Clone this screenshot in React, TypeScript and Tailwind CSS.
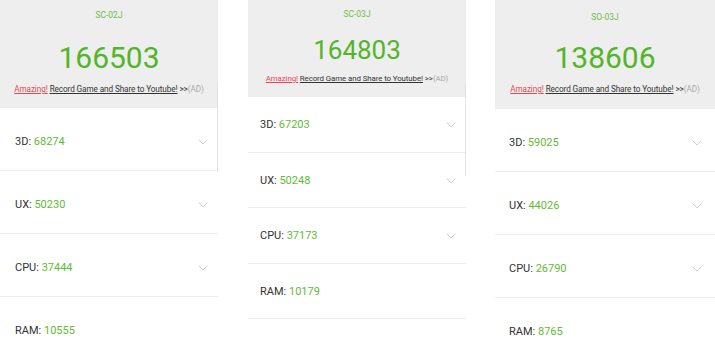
const panels = [
  {
    title: 'SC-02J',
    score: '166503',
    rows: [
      { label: '3D', value: '68274' },
      { label: 'UX', value: '50230' },
      { label: 'CPU', value: '37444' },
      { label: 'RAM', value: '10555' },
    ],
  },
  {
    title: 'SC-03J',
    score: '164803',
    rows: [
      { label: '3D', value: '67203' },
      { label: 'UX', value: '50248' },
      { label: 'CPU', value: '37173' },
      { label: 'RAM', value: '10179' },
    ],
  },
  {
    title: 'SO-03J',
    score: '138606',
    rows: [
      { label: '3D', value: '59025' },
      { label: 'UX', value: '44026' },
      { label: 'CPU', value: '26790' },
      { label: 'RAM', value: '8765' },
    ],
  },
];

function Chevron() {
  return (
    <svg width="10" height="6" viewBox="0 0 10 6" fill="none" className="shrink-0">
      <path d="M1 1l4 4 4-4" stroke="#cfcfcf" strokeWidth="1" strokeLinecap="round" strokeLinejoin="round" />
    </svg>
  );
}

function AdLine({ size }: { size: string }) {
  return (
    <div className={`whitespace-nowrap text-center leading-[12px] tracking-[-0.1px] ${size}`}>
      <span className="text-[#e8474f] underline">Amazing!</span>{' '}
      <span className="text-[#333] underline">Record Game and Share to Youtube!</span>{' '}
      <span className="text-[#333]">&gt;&gt;</span>
      <span className="text-[#aaa]">(AD)</span>
    </div>
  );
}

type Panel = (typeof panels)[number];

function Rows({ panel, rowClass, padClass, lastBorder }: {
  panel: Panel;
  rowClass: string;
  padClass: string;
  lastBorder?: boolean;
}) {
  return (
    <div className="flex flex-col">
      {panel.rows.map((r, i) => (
        <div
          key={r.label}
          className={`flex items-center justify-between border-[#ececec] ${rowClass} ${padClass} ${
            i < panel.rows.length - 1 || lastBorder ? 'border-b' : ''
          }`}
        >
          <span className="text-[11px] text-[#333]">
            {r.label}: <span className="text-[#62bb36]">{r.value}</span>
          </span>
          {r.label !== 'RAM' && <Chevron />}
        </div>
      ))}
    </div>
  );
}

export default function App() {
  const [p1, p2, p3] = panels;
  return (
    <div className="flex h-[360px] w-[715px] overflow-hidden bg-white font-['Roboto',sans-serif]">
      {/* SC-02J */}
      <div className="relative w-[218px] shrink-0">
        <div className="flex h-[108px] flex-col items-center bg-[#efeeef] pt-[9px]">
          <div className="text-[8.5px] leading-[12px] text-[#6cbf45]">{p1.title}</div>
          <div className="mt-[22px] text-[30px] leading-[30px] text-[#52b52a]">{p1.score}</div>
          <div className="mt-[10px]">
            <AdLine size="text-[8.2px]" />
          </div>
        </div>
        <Rows panel={p1} rowClass="h-[63px]" padClass="pl-[15px] pr-[10px] pt-[6px]" />
        <div className="absolute right-0 top-[82px] h-[90px] w-px bg-[#e2e2e2]" />
      </div>

      <div className="w-[30px] shrink-0" />

      {/* SC-03J */}
      <div className="relative w-[218px] shrink-0">
        <div className="flex h-[97px] flex-col items-center bg-[#efeeef] pt-[8px]">
          <div className="text-[8.5px] leading-[12px] text-[#6cbf45]">{p2.title}</div>
          <div className="mt-[17px] text-[26px] leading-[26px] text-[#52b52a]">{p2.score}</div>
          <div className="mt-[10px]">
            <AdLine size="text-[7.9px]" />
          </div>
        </div>
        <Rows panel={p2} rowClass="h-[55.5px]" padClass="pl-[12px] pr-[10px] pt-[2px]" lastBorder />
        <div className="absolute right-0 top-[84px] h-[92px] w-px bg-[#e2e2e2]" />
      </div>

      <div className="w-[29px] shrink-0" />

      {/* SO-03J */}
      <div className="relative w-[220px] shrink-0">
        <div className="flex h-[109px] flex-col items-center bg-[#efeeef] pt-[11px]">
          <div className="text-[8.5px] leading-[12px] text-[#6cbf45]">{p3.title}</div>
          <div className="mt-[20px] text-[30px] leading-[30px] text-[#52b52a]">{p3.score}</div>
          <div className="mt-[10px]">
            <AdLine size="text-[8.2px]" />
          </div>
        </div>
        <Rows panel={p3} rowClass="h-[63px]" padClass="pl-[14px] pr-[13px] pt-[6px]" />
      </div>
    </div>
  );
}
